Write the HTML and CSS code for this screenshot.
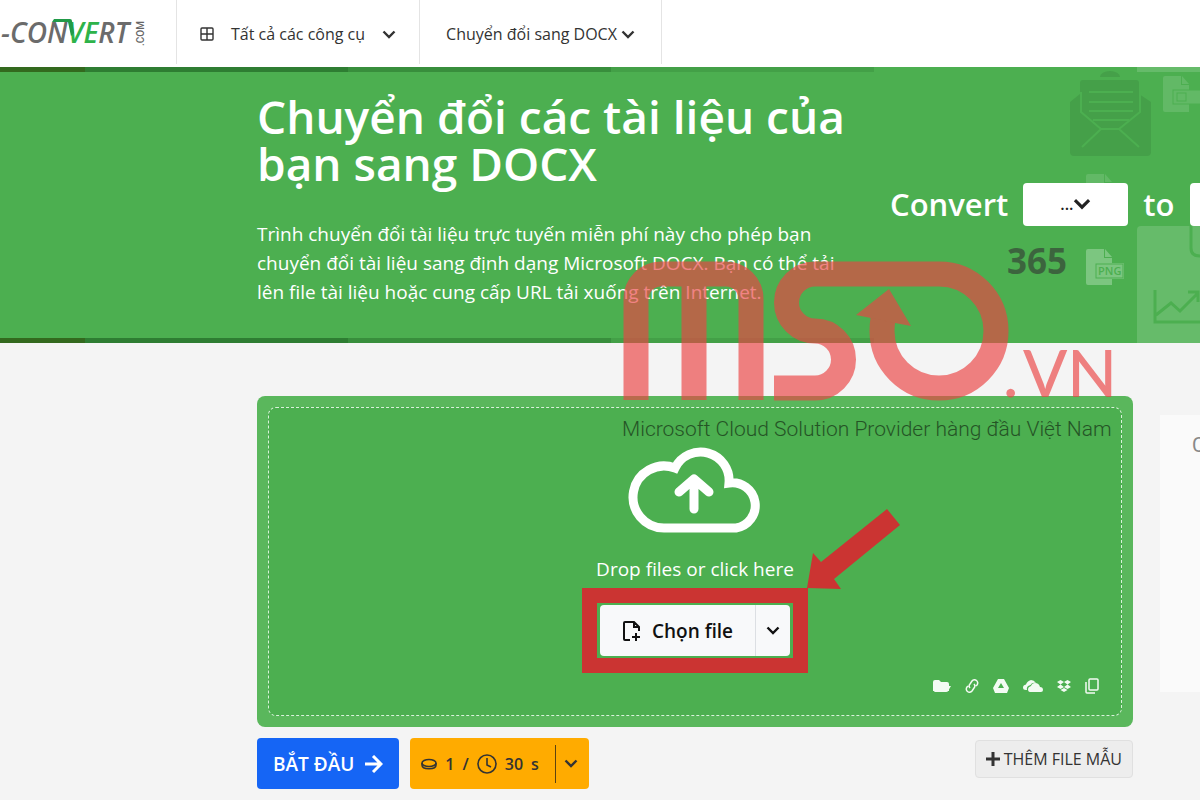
FILE: index.html
```html
<!DOCTYPE html>
<html lang="vi">
<head>
  <meta charset="UTF-8">
  <meta name="viewport" content="width=device-width, initial-scale=1.0">
  <title>Chuyển đổi các tài liệu của bạn sang DOCX</title>
  <link rel="stylesheet" href="styles.css">
</head>
<body>
  <svg class="sprite" aria-hidden="true">
    <symbol id="chevron" viewBox="0 0 14 9">
      <path d="M1.5 1.5 7 7l5.5-5.5" fill="none" stroke="currentColor" stroke-width="2.4"/>
    </symbol>
    <symbol id="doc" viewBox="0 0 38 36">
      <path d="M2 0h16v9h8v27H2a2 2 0 0 1-2-2V2a2 2 0 0 1 2-2z M19 0l7 8h-7z"/>
    </symbol>
  </svg>

  <header class="topbar">
    <a class="logo" href="#" aria-label="-CONVERT.COM">
      <svg width="176" height="66" viewBox="0 0 176 66">
        <text class="logo-text" x="1" y="43">-CON<tspan class="green">VE</tspan>RT</text>
        <path d="M54 19h16q2 0 2 2l2 12-3 3-3-14H52z" fill="#219a48"/>
        <text class="logo-com" transform="translate(144 46) rotate(-90)">.COM</text>
      </svg>
    </a>
    <nav class="nav">
      <a class="nav-item nav-tools" href="#">
        <svg width="14" height="14" viewBox="0 0 14 14" fill="none" stroke="currentColor" stroke-width="1.4"><rect x="1" y="1" width="12" height="12" rx="1"/><path d="M7 1v12M1 7h12"/></svg>
        <span>Tất cả các công cụ</span>
        <svg width="14" height="9"><use href="#chevron"/></svg>
      </a>
      <a class="nav-item nav-format" href="#">
        <span>Chuyển đổi sang DOCX</span>
        <svg width="14" height="9"><use href="#chevron"/></svg>
      </a>
    </nav>
  </header>

  <section class="hero">
    <svg class="hero-art" width="134" height="276" viewBox="1066 67 134 276" aria-hidden="true">
      <g fill="#45a049">
        <path d="M1100 77a10 6 0 0 1 20 0z"/>
        <path d="M1070 102l10-8V83q0-3 3-3h53q3 0 3 3v11l12 8v50q0 4-4 4h-73q-4 0-4-4z"/>
      </g>
      <g fill="none" stroke="#4caf50" stroke-width="2">
        <path d="M1089 92h44M1089 102h44M1089 111h44M1093 120h36M1081 92v20l20 17h18l21-17V92M1101 129l-19 18M1119 129l20 18"/>
      </g>
      <g fill="#62b966">
        <use href="#doc" x="1163" y="76" width="38" height="36"/>
        <use href="#doc" x="1086" y="174" width="38" height="36"/>
      </g>
      <rect x="1137" y="226" width="70" height="117" rx="4" fill="#66bb6a"/>
      <g fill="#7cc680">
        <use href="#doc" x="1086" y="249" width="38" height="36"/>
        <rect x="1095" y="263" width="29" height="16" rx="1"/>
      </g>
      <rect x="1173" y="90" width="34" height="14" fill="#62b966" stroke="#4caf50"/>
      <rect x="1177" y="93" width="9" height="8" fill="none" stroke="#4caf50"/>
      <rect x="1096" y="264" width="27" height="14" fill="none" stroke="#4caf50"/>
      <text class="art-label" x="1098" y="275">PNG</text>
      <g fill="none" stroke="#4caf50" stroke-width="3">
        <path d="M1155 290v32h50M1156 315l15-12 9 8 18-18M1188 292h10v10"/>
        <path d="M1191 226v22q0 8 9 8"/>
      </g>
    </svg>
    <div class="hero-copy">
      <h1>Chuyển đổi các tài liệu của bạn sang DOCX</h1>
      <p>Trình chuyển đổi tài liệu trực tuyến miễn phí này cho phép bạn chuyển đổi tài liệu sang định dạng Microsoft DOCX. Bạn có thể tải lên file tài liệu hoặc cung cấp URL tải xuống trên Internet.</p>
    </div>
    <div class="converter">
      <span>Convert</span>
      <button class="format" type="button">...<svg width="18" height="12"><use href="#chevron"/></svg></button>
      <span>to</span>
      <button class="format" type="button" aria-label="DOCX"></button>
    </div>
  </section>

  <main class="page">
    <div class="workspace">
      <section class="dropzone">
        <div class="dropzone-inner">
          <svg class="cloud" width="134" height="88" viewBox="628 445 134 88" fill="none" stroke="#fff" stroke-width="9">
            <path d="M664 527a31 31 0 1 1 11-60a28.500 28.500 0 0 1 54 15a22 22 0 0 1 7 45z"/>
            <path d="M694 508v-30M679 491l15-13 15 13" stroke-linecap="round" stroke-linejoin="round"/>
          </svg>
          <p class="drop-text">Drop files or click here</p>
          <div class="highlight">
            <div class="choose">
              <button class="choose-file" type="button">
                <svg width="20" height="22" viewBox="0 0 20 22" fill="none" stroke="currentColor" stroke-width="2"><path d="M8 20H3q-1 0-1-1V3q0-1 1-1h9l5 5v4M12 2v5h5M14 13v8M10 17h8"/></svg>
                Chọn file
              </button>
              <button class="choose-more" type="button" aria-label="Chọn file"><svg width="14" height="9"><use href="#chevron"/></svg></button>
            </div>
            <svg class="pointer" width="94" height="82" viewBox="807 509 94 82" aria-hidden="true"><path d="M807 588l6-35 8 9 66-53 13 16-66 54 7 10z" fill="#cb3432"/></svg>
          </div>
          <div class="sources">
            <a href="#"><svg width="18" height="14" viewBox="0 0 18 14" fill="currentColor"><path d="M0 3q0-2 2-2h4l2 2h6q2 0 2 2v1H4L0 11z"/><path d="M5 7h13l-3 5q0 1-2 1H1z"/><path d="M0 5h16v7H0z"/></svg></a>
            <a href="#"><svg width="14" height="14" viewBox="0 0 14 14" fill="none" stroke="currentColor" stroke-width="1.5"><path d="M5 9a3 3 0 0 1 0-4l2-3a3 3 0 0 1 5 4l-1 1M9 5a3 3 0 0 1 0 4l-2 3a3 3 0 0 1-5-4l1-1"/></svg></a>
            <a href="#"><svg width="16" height="14" viewBox="0 0 16 14" fill="currentColor" fill-rule="evenodd"><path d="M5 0h6l5 9-2 5H2L0 9zM8 4L5 9h6z"/></svg></a>
            <a href="#"><svg width="20" height="12" viewBox="0 0 20 12" fill="currentColor"><path d="M3 10Q0 10 0 7.500Q0 5 3 4.500Q4 1 8 0Q11 0 13 3Q9 2 7.500 5Q3 6 4 10z"/><path d="M7 12q-2 0-2-3 0-2 3-3 1-3 4-3 4 0 5 4 3 0 3 3 0 2-2 2z"/></svg></a>
            <a href="#"><svg width="14" height="12" viewBox="0 0 14 12" fill="currentColor"><path d="M3.500 0L7 2 3.500 4.500 0 2zM10.500 0L14 2l-3.500 2.500L7 2zM3.500 4.500L7 7 3.500 9 0 7zM10.500 4.500L14 7l-3.500 2L7 7zM3.500 10L7 8l3.500 2L7 12z"/></svg></a>
            <a href="#"><svg width="14" height="16" viewBox="0 0 14 16" fill="none" stroke="currentColor" stroke-width="1.5"><rect x="4" y="1" width="9" height="11" rx="1"/><path d="M1 4v10q0 1 1 1h8"/></svg></a>
          </div>
        </div>
      </section>

      <div class="actions">
        <button class="btn start" type="button">BẮT ĐẦU
          <svg width="18" height="18" viewBox="0 0 18 18" fill="none" stroke="currentColor" stroke-width="3"><path d="M0 9h16M8 1l8 8-8 8"/></svg>
        </button>
        <button class="btn cost" type="button">
          <svg width="16" height="12" viewBox="0 0 16 12" fill="none" stroke="currentColor" stroke-width="1.600"><ellipse cx="8" cy="5" rx="7" ry="3.500"/><path d="M1 5v2c0 5 14 5 14 0V5"/></svg>
          <span>1</span><span>/</span>
          <svg width="20" height="20" viewBox="0 0 20 20" fill="none" stroke="currentColor" stroke-width="1.600"><circle cx="10" cy="10" r="9"/><path d="M10 4v7l4 2"/></svg>
          <span>30</span><span>s</span>
          <i class="divider"></i>
          <svg width="14" height="9"><use href="#chevron"/></svg>
        </button>
        <button class="sample" type="button">
          <svg width="14" height="14" viewBox="0 0 14 14" stroke="currentColor" stroke-width="3"><path d="M7 0v14M0 7h14"/></svg>
          THÊM FILE MẪU
        </button>
      </div>
    </div>
    <aside class="side">C</aside>
  </main>

  <svg class="watermark" width="520" height="210" viewBox="610 240 520 210" role="img" aria-label="365 MSO.VN">
    <text class="wm-365" x="1007" y="274">365</text>
    <g opacity="0.66">
      <g fill="none" stroke="#eb4444" stroke-width="25">
        <path d="M636 400V299a25 25 0 0 1 25-25h65a25 25 0 0 1 25 25V400M694 274V400"/>
        <path d="M774 388h41a28.500 28.500 0 0 0 0-57a28.500 28.500 0 0 1 0-57H939a57 57 0 1 1-57 57q0-6 1-12"/>
      </g>
      <path d="M889 289l-33 26 15 3 24 5 16 3z" fill="#eb4444"/>
      <text class="wm-vn" x="1003" y="397">.<tspan x="1023">VN</tspan></text>
    </g>
    <text class="wm-tagline" x="622" y="436">Microsoft Cloud Solution Provider hàng đầu Việt Nam</text>
  </svg>
</body>
</html>
```

FILE: styles.css
```css
:root {
  --green: #4caf50;
  --text: #333;
  --gutter: 257px;
  --stripes: linear-gradient(to right, #33691e 85px, #2e7d32 85px 348px, #388e3c 348px 611px, #43a047 611px 874px, #4caf50 874px 1137px, #66bb6a 1137px);
}
* { box-sizing: border-box; }
body {
  margin: 0;
  position: relative;
  min-height: 100vh;
  overflow-x: hidden;
  font-family: "Open Sans", "Noto Sans", sans-serif;
  background: #f4f4f4;
  color: var(--text);
}
svg { display: block; flex: none; }
a { color: inherit; text-decoration: none; }
button {
  font: inherit;
  color: inherit;
  border: none;
  cursor: pointer;
}
.sprite { position: absolute; width: 0; height: 0; }

/* top bar */
.topbar {
  display: flex;
  height: 67px;
  background: #fff;
}
.logo-text {
  font: italic 600 28px "Open Sans", sans-serif;
  fill: #6b6b6b;
}
.logo-text .green { fill: #2eb34a; }
.logo-com {
  font: 500 10px Roboto, sans-serif;
  fill: #666;
}
.nav { display: flex; height: 64px; }
.nav-item {
  display: flex;
  align-items: center;
  padding: 4px 26px 0;
  border-left: 1px solid #e4e4e4;
  font-size: 16px;
  font-weight: 500;
}
.nav-tools { gap: 17px; padding: 4px 23px 0; }
.nav-format { gap: 4px; border-right: 1px solid #e4e4e4; }

/* hero */
.hero {
  position: relative;
  display: flex;
  min-height: 276px;
  padding-left: var(--gutter);
  overflow: hidden;
  color: #fff;
  background: var(--stripes) top / 100% 5px no-repeat, var(--stripes) bottom / 100% 5px no-repeat, var(--green);
}
.hero-art { position: absolute; top: 0; right: 0; }
.hero-copy { flex: none; width: 600px; padding-top: 26px; }
h1 {
  margin: 0 0 33px;
  font-size: 46px;
  font-weight: 600;
  line-height: 47px;
}
.hero-copy p {
  margin: 0;
  font-size: 19px;
  line-height: 29px;
}
.converter {
  position: relative;
  display: flex;
  align-items: center;
  gap: 15px;
  height: 44px;
  margin: 115px 0 0 33px;
  font-size: 31px;
  font-weight: 600;
}
.format {
  display: flex;
  flex: none;
  align-items: center;
  justify-content: center;
  width: 105px;
  height: 43px;
  background: #fff;
  border-radius: 4px;
  font-size: 16px;
  font-weight: 600;
  color: #222;
}
.art-label { font: 600 11px "Open Sans", sans-serif; fill: #4caf50; }

/* workspace */
.page {
  display: grid;
  grid-template-columns: minmax(0, 1fr) 40px;
  gap: 27px;
  padding: 53px 0 11px var(--gutter);
}
.dropzone {
  padding: 11px;
  background: #5ab75c;
  border-radius: 8px;
}
.dropzone-inner {
  display: flex;
  flex-direction: column;
  align-items: center;
  min-height: 309px;
  padding: 38px 22px 20px;
  border: 1px dashed #d9f2da;
  border-radius: 8px;
  background: var(--green);
}
.drop-text {
  margin: 20px 0 4px;
  font-size: 19px;
  line-height: 30px;
  color: #fff;
}
.highlight {
  position: relative;
  padding: 2px 3px;
  border: 15px solid #cb3432;
}
.pointer { position: absolute; left: 100%; bottom: 100%; margin: 0 0 12px 14px; }
.choose {
  display: flex;
  height: 51px;
  background: #f8f9fa;
  border-radius: 4px;
  overflow: hidden;
  color: #111;
}
.choose button { background: transparent; }
.choose-file {
  display: flex;
  align-items: center;
  gap: 10px;
  padding: 0 22px;
  font-size: 19px;
  font-weight: 600;
}
.choose .choose-more { padding: 0 10px; border-left: 1px solid #dcdfe3; }
.sources {
  display: flex;
  align-items: center;
  align-self: flex-end;
  gap: 14px;
  margin-top: 5px;
  color: #f3fbf3;
}
.actions {
  display: flex;
  align-items: flex-start;
  gap: 11px;
  margin-top: 11px;
}
.btn {
  display: flex;
  align-items: center;
  height: 51px;
  border-radius: 4px;
}
.start {
  gap: 11px;
  padding: 0 16px;
  background: #1565f5;
  color: #fff;
  font-size: 19px;
  font-weight: 600;
}
.cost {
  gap: 8px;
  padding: 0 11px;
  background: #ffab00;
  font-size: 16px;
  font-weight: 600;
}
.divider { width: 1px; height: 38px; margin-left: 8px; background: #5c4310; }
.sample {
  display: flex;
  align-items: center;
  gap: 4px;
  height: 38px;
  margin: 2px 0 0 auto;
  padding: 0 10px;
  border: 1px solid #e0e0e0;
  border-radius: 4px;
  background: #ededed;
  font-size: 16px;
}
.side {
  height: 277px;
  margin-top: 19px;
  padding: 18px 0 0 32px;
  overflow: hidden;
  background: #fafafa;
  font: 20px Roboto, sans-serif;
  color: #888;
}

/* watermark laid over the page */
.watermark {
  position: absolute;
  top: 240px;
  left: 610px;
  pointer-events: none;
}
.wm-365 { font: 700 35px "Noto Sans", sans-serif; fill: #333; opacity: 0.6; }
.wm-vn { font: 500 65px Lato, sans-serif; fill: #eb4444; }
.wm-tagline { font: 300 21px Roboto, sans-serif; fill: #10240f; opacity: 0.65; }
```
